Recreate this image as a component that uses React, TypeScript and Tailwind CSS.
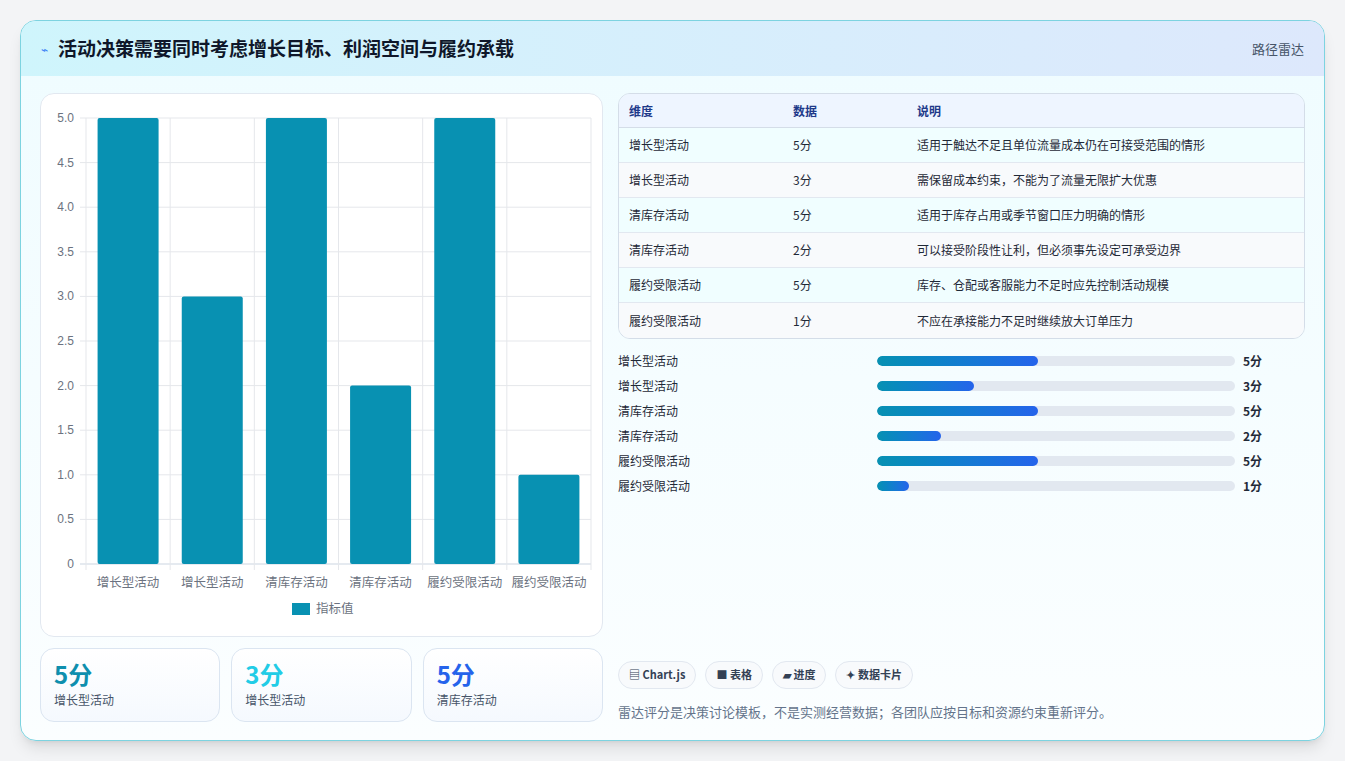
import React from "react";

const rows = [
  ["增长型活动", 5, "适用于触达不足且单位流量成本仍在可接受范围的情形"],
  ["增长型活动", 3, "需保留成本约束，不能为了流量无限扩大优惠"],
  ["清库存活动", 5, "适用于库存占用或季节窗口压力明确的情形"],
  ["清库存活动", 2, "可以接受阶段性让利，但必须事先设定可承受边界"],
  ["履约受限活动", 5, "库存、仓配或客服能力不足时应先控制活动规模"],
  ["履约受限活动", 1, "不应在承接能力不足时继续放大订单压力"],
] as const;

function Chart() {
  const left = 45, right = 550, top = 24, bottom = 470;
  const cw = (right - left) / 6;
  const h = bottom - top;
  const ticks = [0, 0.5, 1, 1.5, 2, 2.5, 3, 3.5, 4, 4.5, 5];
  return (
    <svg width="562" height="544" className="block">
      {ticks.map((t) => {
        const y = bottom - (t / 5) * h;
        return (
          <g key={t}>
            <line x1={left - 6} x2={right} y1={y} y2={y} stroke={t === 0 ? "#cbd5e1" : "#e5e7eb"} />
            <text x={left - 12} y={y + 4} textAnchor="end" fontSize="12" fill="#6b7280" fontFamily="Liberation Sans, sans-serif">
              {t === 0 ? "0" : t.toFixed(1)}
            </text>
          </g>
        );
      })}
      {Array.from({ length: 7 }).map((_, i) => (
        <line key={i} x1={left + i * cw} x2={left + i * cw} y1={top} y2={bottom + 6} stroke="#e5e7eb" />
      ))}
      {rows.map((r, i) => {
        const bh = (r[1] / 5) * h;
        const x = left + i * cw + (cw - 61) / 2;
        return (
          <g key={i}>
            <rect x={x} y={bottom - bh} width={61} height={bh} fill="#0891b2" rx="2" />
            <text x={left + i * cw + cw / 2} y={bottom + 23} textAnchor="middle" fontSize="12.5" fill="#6b7280" fontFamily="Noto Sans CJK SC, sans-serif">
              {r[0]}
            </text>
          </g>
        );
      })}
      <rect x={251} y={509} width={18} height={12} fill="#0891b2" />
      <text x={275} y={519} fontSize="12.5" fill="#6b7280" fontFamily="Noto Sans CJK SC, sans-serif">指标值</text>
    </svg>
  );
}

export default function App() {
  return (
    <div className="w-[1345px] h-[761px] bg-[#f3f4f6] p-[20px]" style={{ fontFamily: '"Noto Sans CJK SC", "Noto Sans", sans-serif' }}>
      <div className="h-[721px] rounded-[16px] border border-[#7dd3e0] bg-gradient-to-b from-[#effcff] to-[#fbfeff] overflow-hidden shadow-lg flex flex-col">
        <div className="h-[55px] shrink-0 flex items-center justify-between px-[20px] bg-gradient-to-r from-[#cff5fc] to-[#dde8fc]">
          <div className="flex items-center gap-[10px]">
            <span className="text-[12px] text-[#3b82f6]">⌁</span>
            <span className="text-[19px] font-bold text-[#0f172a]">活动决策需要同时考虑增长目标、利润空间与履约承载</span>
          </div>
          <span className="text-[13px] text-[#475569]">路径雷达</span>
        </div>
        <div className="flex-1 flex gap-[15px] px-[19px] pt-[17px]">
          <div className="w-[563px] flex flex-col gap-[11px]">
            <div className="h-[544px] rounded-[14px] border border-[#e2e8f0] bg-white overflow-hidden">
              <Chart />
            </div>
            <div className="grid grid-cols-3 gap-[11px]">
              {[
                ["5分", "text-[#0e8fae]", "增长型活动"],
                ["3分", "text-[#22cce6]", "增长型活动"],
                ["5分", "text-[#2563eb]", "清库存活动"],
              ].map(([v, c, l], i) => (
                <div key={i} className="h-[74px] rounded-[14px] border border-[#dbe5f1] bg-gradient-to-b from-white to-[#f5f9fe] px-[13px] pt-[10px]">
                  <div className={`text-[24px] font-bold leading-[30px] ${c}`}>{v}</div>
                  <div className="text-[12px] text-[#475569] mt-[2px]">{l}</div>
                </div>
              ))}
            </div>
          </div>
          <div className="w-[688px] flex flex-col">
            <div className="rounded-[12px] border border-[#d4dde8] overflow-hidden text-[12px]">
              <div className="flex h-[34px] items-center bg-[#eef5ff] border-b border-[#d4dde8] text-[#1e3a8a] font-semibold">
                <div className="w-[164px] pl-[10px]">维度</div>
                <div className="w-[124px] pl-[10px]">数据</div>
                <div className="pl-[10px]">说明</div>
              </div>
              {rows.map((r, i) => (
                <div key={i} className={`flex h-[35px] items-center text-[#1f2937] ${i < 5 ? "border-b border-[#e2e8f0]" : ""} ${i % 2 === 0 ? "bg-[#f0feff]" : "bg-[#f8fafc]"}`}>
                  <div className="w-[164px] pl-[10px]">{r[0]}</div>
                  <div className="w-[124px] pl-[10px]">{r[1]}分</div>
                  <div className="pl-[10px]">{r[2]}</div>
                </div>
              ))}
            </div>
            <div className="mt-[9px] flex flex-col">
              {rows.map((r, i) => (
                <div key={i} className="h-[25px] flex items-center text-[12px] text-[#1f2937]">
                  <div className="w-[259px]">{r[0]}</div>
                  <div className="w-[358px] h-[10px] rounded-full bg-[#e2e8f0] overflow-hidden">
                    <div className="h-full rounded-full bg-gradient-to-r from-[#0891b2] to-[#2563eb]" style={{ width: `${r[1] * 9}%` }} />
                  </div>
                  <div className="ml-[8px] font-bold">{r[1]}分</div>
                </div>
              ))}
            </div>
            <div className="mt-auto mb-[19px]">
              <div className="flex gap-[9px] text-[11px] font-semibold text-[#334155]">
                {["▤ Chart.js", "■ 表格", "▰ 进度", "✦ 数据卡片"].map((t) => (
                  <span key={t} className="h-[28px] px-[10px] flex items-center rounded-full border border-[#e2e8f0] bg-[#f8fafc]">{t}</span>
                ))}
              </div>
              <div className="mt-[13px] text-[13px] text-[#64748b]">雷达评分是决策讨论模板，不是实测经营数据；各团队应按目标和资源约束重新评分。</div>
            </div>
          </div>
        </div>
      </div>
    </div>
  );
}
